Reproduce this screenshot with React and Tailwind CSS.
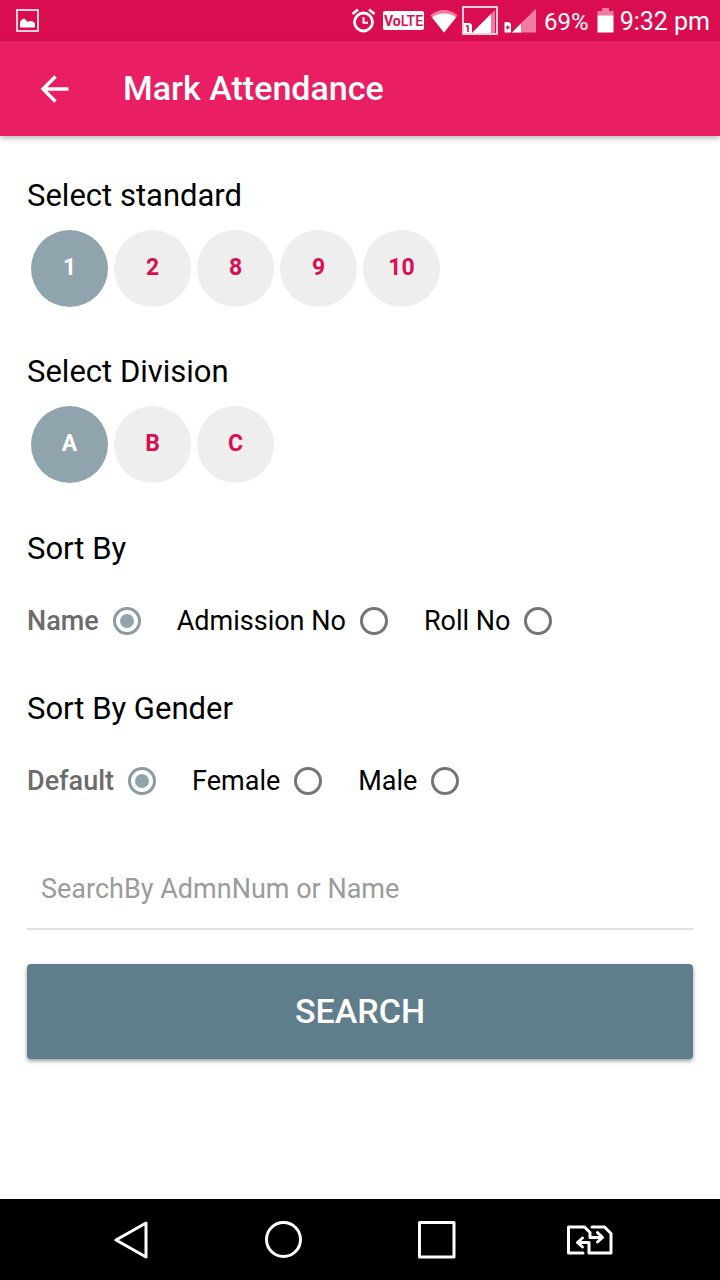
import { useState } from "react";

const standards = ["1", "2", "8", "9", "10"];
const divisions = ["A", "B", "C"];

function StatusBar() {
  return (
    <div className="flex items-center justify-between h-[41px] pl-4 pr-2.5 bg-[#db0d51] text-white">
      {/* Screenshot notification */}
      <svg className="w-[23px] h-[23px]" viewBox="0 0 23 23">
        <rect x="1" y="1" width="21" height="21" fill="none" stroke="#fff" strokeWidth="1.6" />
        <path d="M4 18.500v-5.500q2-3.500 4-3.500 2 .5 3.500 3.500 2-1.500 4-1 3 .5 3.500 3v3.500z" fill="#fff" />
      </svg>

      <div className="flex items-center">
        {/* Alarm */}
        <svg className="w-[25px] h-[25px] mr-[7px]" viewBox="0 0 25 25" fill="none" stroke="#fff">
          <circle cx="12.500" cy="14" r="9" strokeWidth="2.800" />
          <path d="M12.500 9v5.800h4.500" strokeWidth="2" />
          <path d="M1.500 6 7 1.500M23.500 6 18 1.500" strokeWidth="2.600" />
        </svg>
        <span className="flex items-center justify-center w-[41px] h-[19px] mr-1.5 rounded-xs bg-white text-[#db0d51] text-[14px] leading-none">
          <b>Vo</b>
          <span className="font-medium">LTE</span>
        </span>
        {/* Wifi */}
        <svg className="w-[28px] h-[24px] mr-1" viewBox="0 0 28 24">
          <path d="M14 23.500 .5 6.500Q6 1 14 1t13.500 5.500z" fill="#f17ba2" />
          <path d="M14 23.500 2 8.500Q7 4.500 14 4.500t12 4z" fill="#fff" />
        </svg>
        {/* Sim 1 */}
        <svg className="w-[36px] h-[29px] mr-1.5" viewBox="0 0 36 29">
          <rect x="1" y="1" width="34" height="27" fill="none" stroke="#fff" strokeWidth="1.600" />
          <path d="M10 27 33 4v23z" fill="#f17ba2" />
          <path d="M10 27 29 8v19z" fill="#fff" />
          <path d="M2 17h6l2 2v8H2z" fill="#fff" />
          <path d="M4 20h2v6" fill="none" stroke="#db0d51" strokeWidth="1.600" />
        </svg>
        {/* Sim 2 */}
        <svg className="w-[33px] h-[25px] mr-[7px]" viewBox="0 0 33 25">
          <path d="M8 24.500 32 .5v24z" fill="#f17ba2" />
          <path d="M8 24.500 17 15.500v9z" fill="#fff" />
          <path d="M.5 14H5l2 2v8.500H.5z" fill="#fff" />
          <path d="M2 19.500h3.500M3.700 17.500v4" stroke="#db0d51" strokeWidth="1.400" />
        </svg>
        <span className="pt-0.5 text-[24px] leading-none mr-2">69%</span>
        {/* Battery */}
        <svg className="w-[17px] h-[25px] mr-1.5" viewBox="0 0 17 25">
          <path d="M5 0h7v3h4.500v6H.5V3H5z" fill="#f17ba2" />
          <path d="M.5 7.500h16v17H.5z" fill="#fff" />
        </svg>
        <span className="pt-0.5 text-[25px] leading-none">9:32 pm</span>
      </div>
    </div>
  );
}

function CircleGroup({ label, items, value, onChange, className = "" }) {
  return (
    <section className={className}>
      <h2 className="text-[31px] leading-10">{label}</h2>
      <div className="flex flex-wrap gap-1.5 mt-3.5 pl-1" role="group" aria-label={label}>
        {items.map((item) => (
          <button
            key={item}
            type="button"
            aria-pressed={value === item}
            onClick={() => onChange(item)}
            className={`w-[77px] h-[77px] rounded-full text-[23px] font-bold ${
              value === item ? "bg-[#90a4ae] text-white" : "bg-[#eeeeee] text-[#d80f54]"
            }`}
          >
            {item}
          </button>
        ))}
      </div>
    </section>
  );
}

function RadioGroup({ label, name, items, value, onChange, className = "" }) {
  return (
    <fieldset className={className}>
      <legend className="text-[31px] leading-10">{label}</legend>
      <div className="flex flex-wrap gap-x-9 mt-8">
        {items.map((item) => (
          <label
            key={item}
            className={`flex items-center gap-3.5 text-[27px] leading-10 ${
              value === item ? "font-medium text-[#6b6b6b]" : ""
            }`}
          >
            {item}
            <input
              type="radio"
              name={name}
              value={item}
              checked={value === item}
              onChange={() => onChange(item)}
              className="appearance-none grid place-items-center w-7 h-7 rounded-full border-3 border-[#757575] checked:border-[#8b9ba3] checked:before:block checked:before:w-3.5 checked:before:h-3.5 checked:before:rounded-full checked:before:bg-[#90a4ae]"
            />
          </label>
        ))}
      </div>
    </fieldset>
  );
}

function NavBar() {
  return (
    <nav className="flex items-center justify-center gap-[103px] h-[81px] bg-black text-white">
      <button type="button" aria-label="Back">
        <svg className="w-[50px] h-[38px]" viewBox="0 0 50 38" fill="none" stroke="currentColor" strokeWidth="3" strokeLinejoin="round">
          <path d="M40 2v34L10 19z" />
        </svg>
      </button>
      <button type="button" aria-label="Home">
        <svg className="w-[50px] h-[38px]" viewBox="0 0 50 38" fill="none" stroke="currentColor" strokeWidth="3">
          <circle cx="24.500" cy="18.500" r="17" />
        </svg>
      </button>
      <button type="button" aria-label="Recent apps">
        <svg className="w-[50px] h-[38px]" viewBox="0 0 50 38" fill="none" stroke="currentColor" strokeWidth="3" strokeLinejoin="round">
          <rect x="7.500" y="1.500" width="34.500" height="34.500" />
        </svg>
      </button>
      <button type="button" aria-label="Switch sim">
        <svg className="w-[50px] h-[38px]" viewBox="0 0 50 38" fill="none" stroke="currentColor" strokeWidth="3" strokeLinejoin="round" strokeLinecap="round">
          <path d="M18 32H3.500V6H19.500l5.500 5.500v5h11" />
          <path d="M32.500 11.500 37.500 16.500l-5 4.500" />
          <path d="M27 6H39.500l6.500 6.500V32H24V21.500H13" />
          <path d="M17.500 17 12.500 21.500l5 4.500" />
        </svg>
      </button>
    </nav>
  );
}

export default function App() {
  const [standard, setStandard] = useState("1");
  const [division, setDivision] = useState("A");
  const [sortBy, setSortBy] = useState("Name");
  const [gender, setGender] = useState("Default");
  const [query, setQuery] = useState("");

  return (
    <div className="flex flex-col min-h-screen bg-white text-black font-['Roboto',sans-serif]">
      <StatusBar />

      <header className="flex items-center gap-[54px] h-[95px] pl-10 bg-[#ea1e63] text-white shadow-[0_2px_6px_rgba(0,0,0,0.3)]">
        <button type="button" aria-label="Go back">
          <svg className="w-[29px] h-[28px]" viewBox="0 0 29 28" fill="none" stroke="currentColor" strokeWidth="3.400">
            <path d="M28.500 14H3M15.500 1.500 3 14l12.500 12.500" />
          </svg>
        </button>
        <h1 className="pb-0.5 text-[34px] leading-10 font-medium">Mark Attendance</h1>
      </header>

      <main className="flex-1 px-[27px] pt-10 pb-10">
        <CircleGroup label="Select standard" items={standards} value={standard} onChange={setStandard} />
        <CircleGroup
          label="Select Division"
          items={divisions}
          value={division}
          onChange={setDivision}
          className="mt-[45px]"
        />
        <RadioGroup
          label="Sort By"
          name="sort"
          items={["Name", "Admission No", "Roll No"]}
          value={sortBy}
          onChange={setSortBy}
          className="mt-[46px]"
        />
        <RadioGroup
          label="Sort By Gender"
          name="gender"
          items={["Default", "Female", "Male"]}
          value={gender}
          onChange={setGender}
          className="mt-12"
        />

        <input
          type="text"
          aria-label="SearchBy AdmnNum or Name"
          placeholder="SearchBy AdmnNum or Name"
          value={query}
          onChange={(e) => setQuery(e.target.value)}
          className="block w-full h-20 mt-[49px] px-3.5 border-b-2 border-[#e0e0e0] text-[27px] placeholder:text-[#9b9b9b] outline-none"
        />
        <button
          type="button"
          className="block w-full h-[95px] mt-[34px] rounded-sm bg-[#607d8b] text-white text-[34px] font-medium shadow-[0_2px_4px_rgba(0,0,0,0.4)]"
        >
          SEARCH
        </button>
      </main>

      <NavBar />
    </div>
  );
}
